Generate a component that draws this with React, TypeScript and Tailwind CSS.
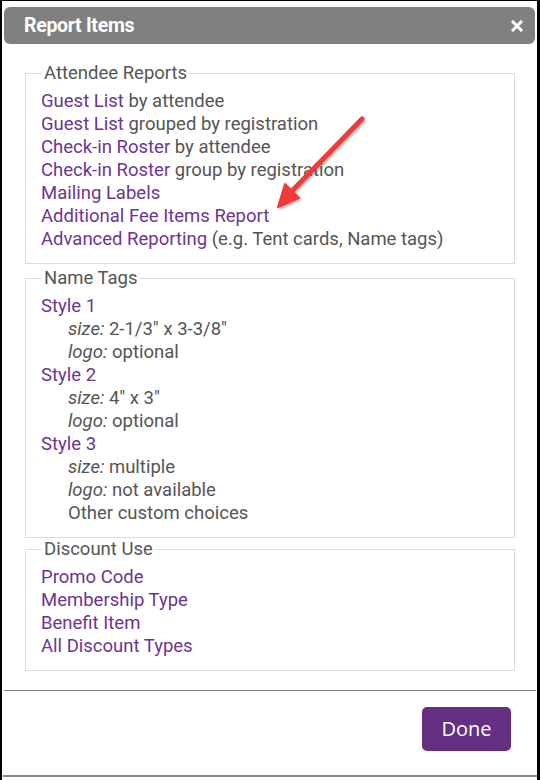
import React from "react";

const link = "text-[#6b3594]";
const gray = "text-[#555]";

function Fs({ title, children, className = "" }: { title: string; children: React.ReactNode; className?: string }) {
  return (
    <fieldset className={`border border-[#dcdcdc] pl-[15px] pr-[10px] pt-[5px] pb-[12px] ${className}`}>
      <legend className="ml-[1px] px-[2px] text-[18.5px] leading-[23px] text-[#555]">{title}</legend>
      {children}
    </fieldset>
  );
}

function Line({ children, className = gray }: { children: React.ReactNode; className?: string }) {
  return <div className={`text-[18.5px] leading-[23px] whitespace-nowrap ${className}`}>{children}</div>;
}

const sub = `pl-[27px] ${gray}`;

export default function App() {
  return (
    <div className="w-[540px] h-[780px] bg-black pl-[2px] pt-[1px] pr-[3px] overflow-hidden" style={{ fontFamily: "Roboto, 'Liberation Sans', sans-serif" }}>
      <div className="relative bg-white h-[779px] flex flex-col">
        <div className="px-[2px] pt-[6px]">
          <div className="h-[37px] rounded-[6px] bg-[#808080] flex items-center justify-between pl-[20px] pr-[12px]">
            <span className="text-white font-bold text-[19.5px] tracking-[-0.3px]">Report Items</span>
            <svg width="12" height="12" viewBox="0 0 12 12">
              <path d="M2 2 L10 10 M10 2 L2 10" stroke="#fff" strokeWidth="3" strokeLinecap="square" />
            </svg>
          </div>
        </div>
        <div className="pl-[23px] pr-[22px] pt-[18px]">
          <Fs title="Attendee Reports">
            <Line><span className={link}>Guest List</span> by attendee</Line>
            <Line><span className={link}>Guest List</span> grouped by registration</Line>
            <Line><span className={link}>Check-in Roster</span> by attendee</Line>
            <Line><span className={link}>Check-in Roster</span> group by registration</Line>
            <Line><span className={link}>Mailing Labels</span></Line>
            <Line><span className={link}>Additional Fee Items Report</span></Line>
            <Line><span className={link}>Advanced Reporting</span> (e.g. Tent cards, Name tags)</Line>
          </Fs>
          <Fs title="Name Tags" className="mt-[3px]">
            <Line className={link}>Style 1</Line>
            <Line className={sub}><i>size:</i> 2-1/3" x 3-3/8"</Line>
            <Line className={sub}><i>logo:</i> optional</Line>
            <Line className={link}>Style 2</Line>
            <Line className={sub}><i>size:</i> 4" x 3"</Line>
            <Line className={sub}><i>logo:</i> optional</Line>
            <Line className={link}>Style 3</Line>
            <Line className={sub}><i>size:</i> multiple</Line>
            <Line className={sub}><i>logo:</i> not available</Line>
            <Line className={sub}>Other custom choices</Line>
          </Fs>
          <Fs title="Discount Use" className="mt-[0px]">
            <Line className={link}>Promo Code</Line>
            <Line className={link}>Membership Type</Line>
            <Line className={link}>Benefit Item</Line>
            <Line className={link}>All Discount Types</Line>
          </Fs>
        </div>
        <div className="mt-[19px] ml-[2px] mr-[1px] h-px bg-[#888]" />
        <div className="flex justify-end pr-[26px] pt-[16px]">
          <button className="w-[89px] h-[44px] rounded-[5px] bg-[#652f82] text-white text-[20px]" style={{ fontFamily: "'Open Sans', 'DejaVu Sans', sans-serif" }}>
            Done
          </button>
        </div>
        <div className="mt-[24px] ml-[1px] h-[2px] bg-[#888]" />
        <svg className="absolute left-0 top-0 pointer-events-none" width="540" height="780">
          <defs>
            <filter id="sh" x="-20%" y="-20%" width="140%" height="140%">
              <feDropShadow dx="1.5" dy="1.5" stdDeviation="1.2" floodColor="#000" floodOpacity="0.3" />
            </filter>
          </defs>
          <g filter="url(#sh)" transform="translate(-2,-1)">
            <line x1="362" y1="119" x2="291" y2="192" stroke="#ee3b3b" strokeWidth="5" strokeLinecap="round" />
            <polygon points="278,207 299,198 285,184" fill="#ee3b3b" stroke="#ee3b3b" strokeWidth="2" strokeLinejoin="round" />
          </g>
        </svg>
      </div>
    </div>
  );
}
